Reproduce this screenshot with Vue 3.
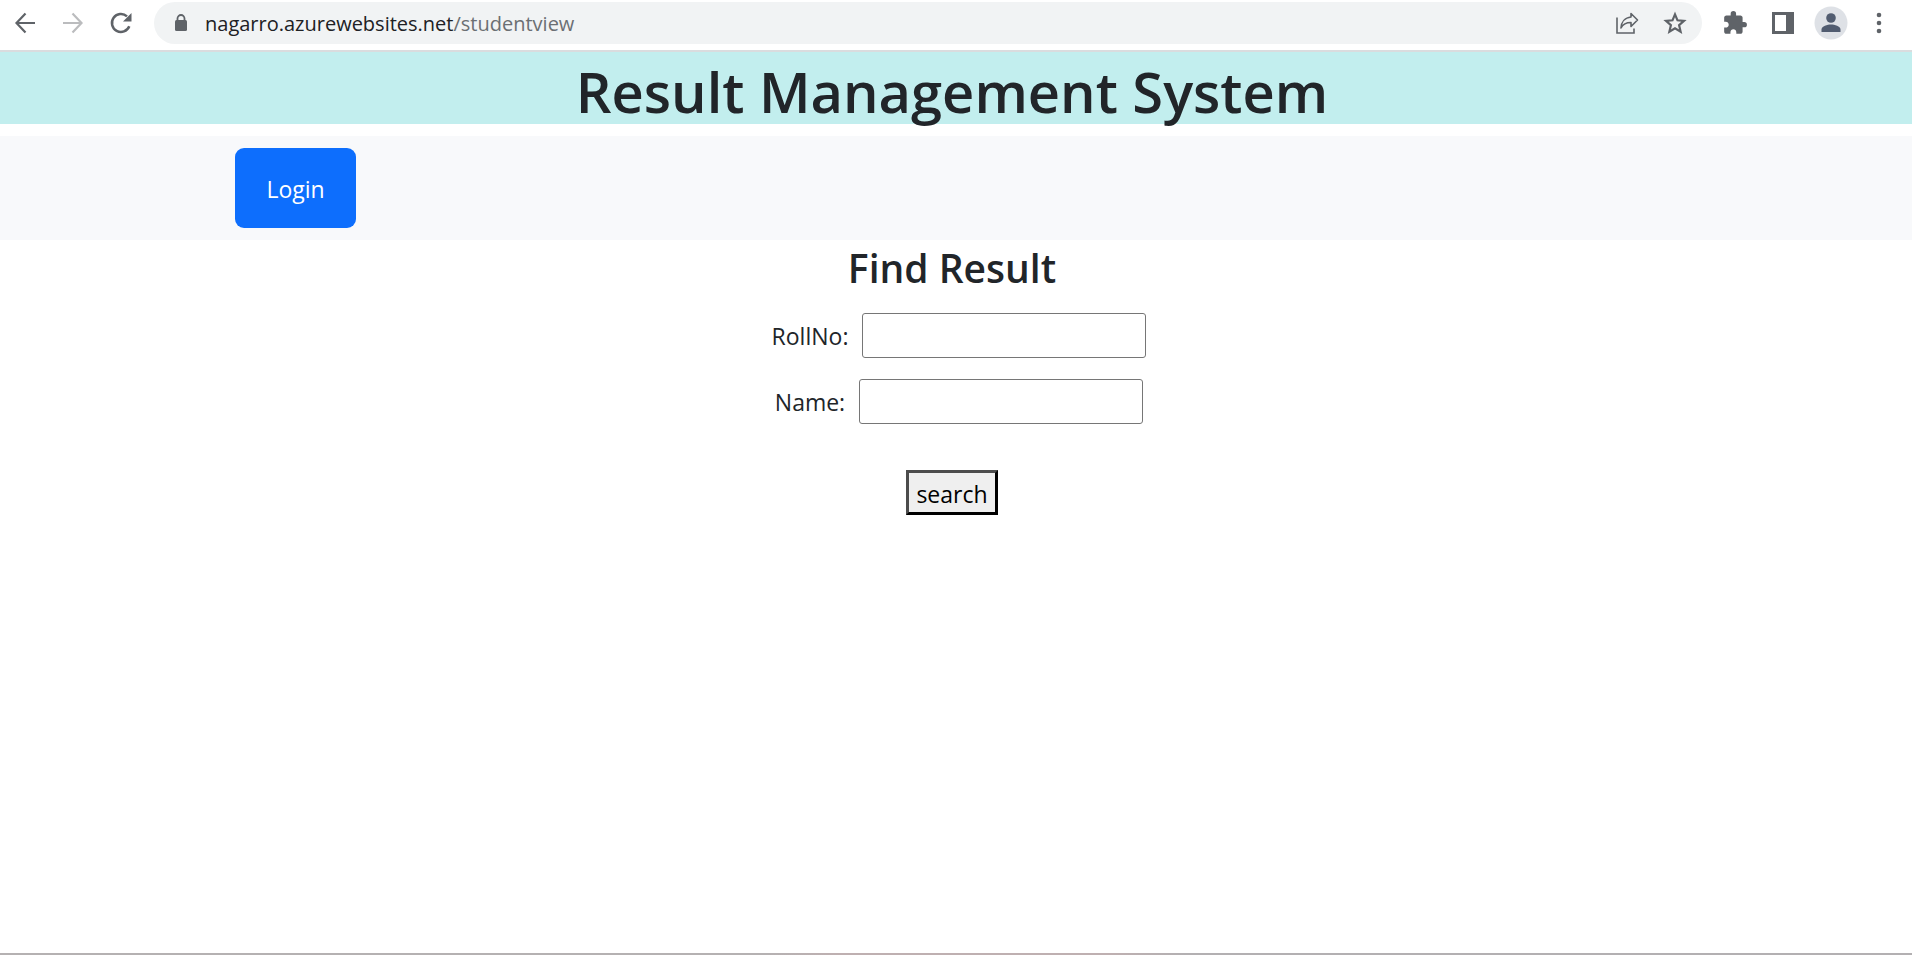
<script setup>
import { ref } from 'vue'

const rollNo = ref('')
const name = ref('')
</script>

<template>
  <div class="window">
    <header class="toolbar">
      <button class="tool" type="button" aria-label="Back">
        <svg width="24" height="24" viewBox="0 0 24 24" fill="none" stroke="#5f6368" stroke-width="2.2"><path d="M22 12H4M12.5 2.5L3.5 12l9 9.500" /></svg>
      </button>
      <button class="tool" type="button" aria-label="Forward">
        <svg width="24" height="24" viewBox="0 0 24 24" fill="none" stroke="#bbbcbe" stroke-width="2.2"><path d="M2 12h18M11.500 2.500l9 9.500-9 9.500" /></svg>
      </button>
      <button class="tool" type="button" aria-label="Reload">
        <svg width="24" height="24" viewBox="0 0 24 24"><path d="M20.300 15.300A9 9 0 1 1 18 5.300" fill="none" stroke="#5f6368" stroke-width="2.500" /><path d="M22.500 2v8.500H14z" fill="#5f6368" /></svg>
      </button>
      <div class="address">
        <svg class="lock" width="14" height="18" viewBox="0 0 14 18"><path d="M3.500 7V4.500a3.500 3.500 0 0 1 7 0V7" fill="none" stroke="#5f6368" stroke-width="1.800" /><rect x="1" y="6" width="12" height="11" rx="1.500" fill="#5f6368" /></svg>
        <span class="url">nagarro.azurewebsites.net<span class="path">/studentview</span></span>
        <button class="tool" type="button" aria-label="Share">
          <svg width="24" height="24" viewBox="0 0 24 24" fill="none" stroke="#5f6368" stroke-width="1.600"><path d="M2 6.500v15.500h17v-4.500" /><path d="M16 2.500l6.500 6.500-6.500 6.500v-4C11 11.500 8 13 6 17c.3-6 4-10.500 10-11z" stroke-linejoin="round" /></svg>
        </button>
        <button class="tool" type="button" aria-label="Bookmark this page">
          <svg width="24" height="24" viewBox="0 0 24 24" fill="none" stroke="#5f6368" stroke-width="2.200"><path d="M12 3.300l2.500 6 6.500.6-4.900 4.300 1.500 6.400-5.600-3.400-5.600 3.400 1.500-6.400L3 9.900l6.500-.6z" /></svg>
        </button>
      </div>
      <button class="tool" type="button" aria-label="Extensions">
        <svg width="26" height="26" viewBox="0 0 24 24"><path fill="#5f6368" d="M20.500 11H19V7c0-1.100-.9-2-2-2h-4V3.500a2.500 2.500 0 0 0-5 0V5H4c-1.100 0-1.990.9-1.990 2v3.800H3.500c1.490 0 2.700 1.210 2.700 2.700s-1.210 2.700-2.700 2.700H2V20c0 1.100.9 2 2 2h3.800v-1.500c0-1.490 1.210-2.700 2.700-2.700s2.700 1.210 2.700 2.700V22H17c1.100 0 2-.9 2-2v-4h1.500a2.500 2.500 0 0 0 0-5z" /></svg>
      </button>
      <button class="tool" type="button" aria-label="Side panel">
        <svg width="22" height="22" viewBox="0 0 22 22"><path fill="#5f6368" fill-rule="evenodd" d="M0 0h22v22H0zM3 3v16h11V3z" /></svg>
      </button>
      <button class="tool" type="button" aria-label="Profile">
        <svg width="34" height="34" viewBox="0 0 34 34"><circle cx="17" cy="17" r="16.500" fill="#dee1e6" /><circle cx="17" cy="12" r="4.800" fill="#515c70" /><path fill="#515c70" d="M7.500 26v-2.500c0-3.500 6-5 9.500-5s9.500 1.500 9.500 5V26z" /></svg>
      </button>
      <button class="tool" type="button" aria-label="Menu">
        <svg width="24" height="24" viewBox="0 0 24 24" fill="#5f6368"><circle cx="12" cy="4" r="2.300" /><circle cx="12" cy="12" r="2.300" /><circle cx="12" cy="20" r="2.300" /></svg>
      </button>
    </header>

    <main class="page">
      <h1>Result Management System</h1>
      <nav class="nav">
        <button class="login" type="button">Login</button>
      </nav>
      <form class="find" @submit.prevent>
        <h2>Find Result</h2>
        <div class="row">
          <label for="roll">RollNo:</label>
          <input id="roll" v-model="rollNo" type="text" />
        </div>
        <div class="row">
          <label for="name">Name:</label>
          <input id="name" v-model="name" type="text" />
        </div>
        <button class="search" type="submit">search</button>
      </form>
    </main>
    <div class="edge"></div>
  </div>
</template>

<style>
body {
  margin: 0;
}
</style>

<style scoped>
.window {
  box-sizing: border-box;
  display: flex;
  flex-direction: column;
  min-height: 100vh;
  background: #fff;
  color: #212529;
  font-family: "Segoe UI", "Open Sans", "Noto Sans", sans-serif;
  font-size: 23px;
}

button,
input {
  box-sizing: border-box;
  font-family: inherit;
}

.toolbar {
  display: flex;
  align-items: center;
  gap: 14px;
  padding: 2px 16px 6px 8px;
  border-bottom: 2px solid #dadcde;
}

.tool {
  display: flex;
  flex: none;
  align-items: center;
  justify-content: center;
  width: 34px;
  height: 34px;
  padding: 0;
  border: 0;
  background: none;
}

.address {
  display: flex;
  flex: 1;
  align-items: center;
  gap: 14px;
  height: 42px;
  margin: 0 2px;
  padding: 0 10px 0 20px;
  border-radius: 21px;
  background: #f1f3f4;
}

.lock {
  flex: none;
}

.url {
  flex: 1;
  padding-left: 3px;
  color: #202124;
  font-size: 20px;
}

.path {
  color: #6b6f73;
}

.page {
  flex: 1;
}

h1,
h2 {
  margin: 0;
  padding-right: 8px;
  font-weight: 600;
  text-align: center;
}

h1 {
  margin-bottom: 12px;
  padding-top: 6px;
  background: #c2eeee;
  font-size: 56px;
  line-height: 66px;
}

.nav {
  padding: 12px 235px;
  background: #f8f9fb;
}

.login {
  display: block;
  width: 121px;
  height: 80px;
  padding: 2px 0 0;
  border: 0;
  border-radius: 9px;
  background: #0d6efd;
  color: #fff;
  font-size: 23px;
}

.find {
  display: flex;
  flex-direction: column;
  align-items: center;
}

h2 {
  margin-bottom: 18px;
  font-size: 39px;
  line-height: 55px;
}

.row {
  display: flex;
  align-items: center;
  gap: 14px;
  margin-bottom: 21px;
  padding: 0 8px 0 14px;
}

.row input {
  width: 284px;
  height: 45px;
  padding: 2px 4px;
  border: 1px solid #767676;
  border-radius: 3px;
  background: #fff;
  font-size: 23px;
}

.search {
  height: 45px;
  margin: 25px 8px 0 0;
  padding: 2px 7px 0;
  border: 3px solid;
  border-color: #4c4c4c #000 #000 #4c4c4c;
  background: #efefef;
  color: #000;
  font-size: 23px;
  line-height: 36px;
}

.edge {
  height: 2px;
  background: linear-gradient(90deg, #b5b1b2 0 40%, #bfb0b1 44% 58%, #b3b0b2 62%);
}
</style>
